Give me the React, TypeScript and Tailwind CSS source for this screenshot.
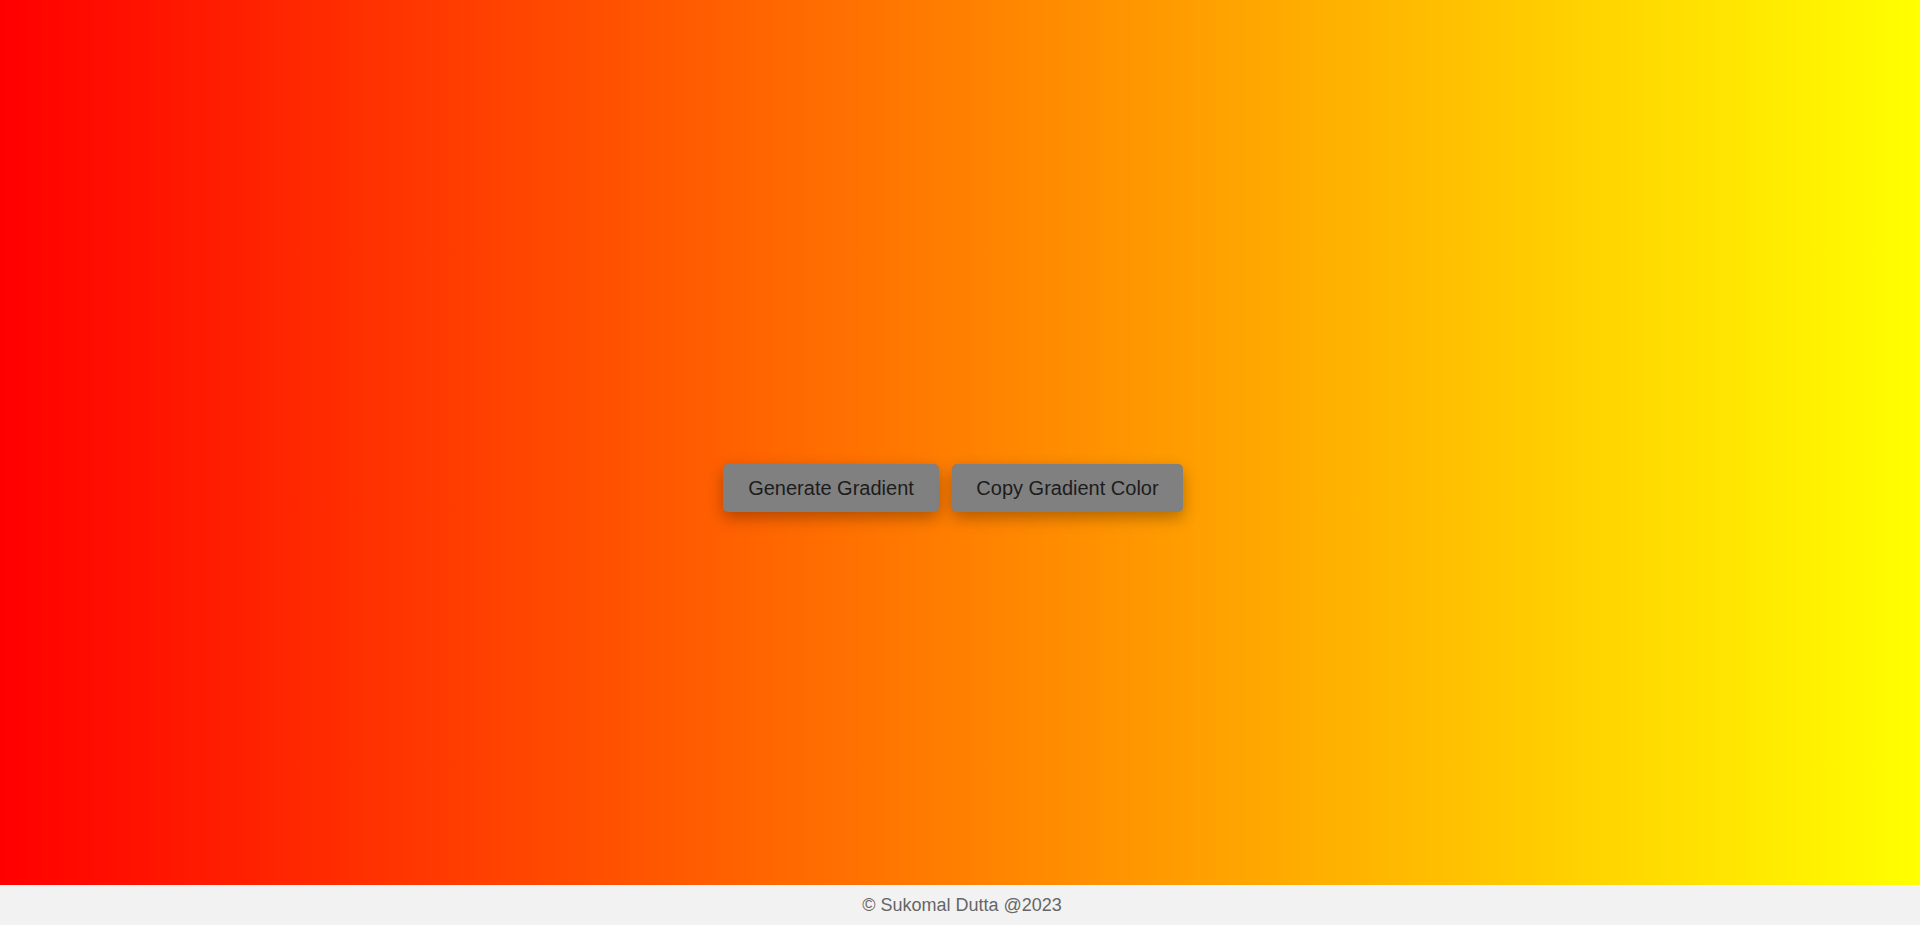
export default function App() {
  return (
    <div className="flex flex-col min-h-[925px] font-['Liberation_Sans',Arial,sans-serif]">
      <div className="h-[885px] bg-[linear-gradient(to_right,#ff0000,#ffff00)] flex items-center justify-center">
        <div className="flex gap-[13px] mt-[91px] mr-[14px]">
          <button className="h-12 w-[216px] rounded-[5px] bg-[#808080] text-[20px] text-[#1c1c1c] shadow-[0_6px_16px_rgba(0,0,0,0.3)]">
            Generate Gradient
          </button>
          <button className="h-12 w-[231px] rounded-[5px] bg-[#808080] text-[20px] text-[#1c1c1c] shadow-[0_6px_16px_rgba(0,0,0,0.3)]">
            Copy Gradient Color
          </button>
        </div>
      </div>
      <footer className="h-10 bg-[#f2f2f2] flex items-center justify-center pl-1 text-[18px] text-[#666666]">
        © Sukomal Dutta @2023
      </footer>
    </div>
  )
}
